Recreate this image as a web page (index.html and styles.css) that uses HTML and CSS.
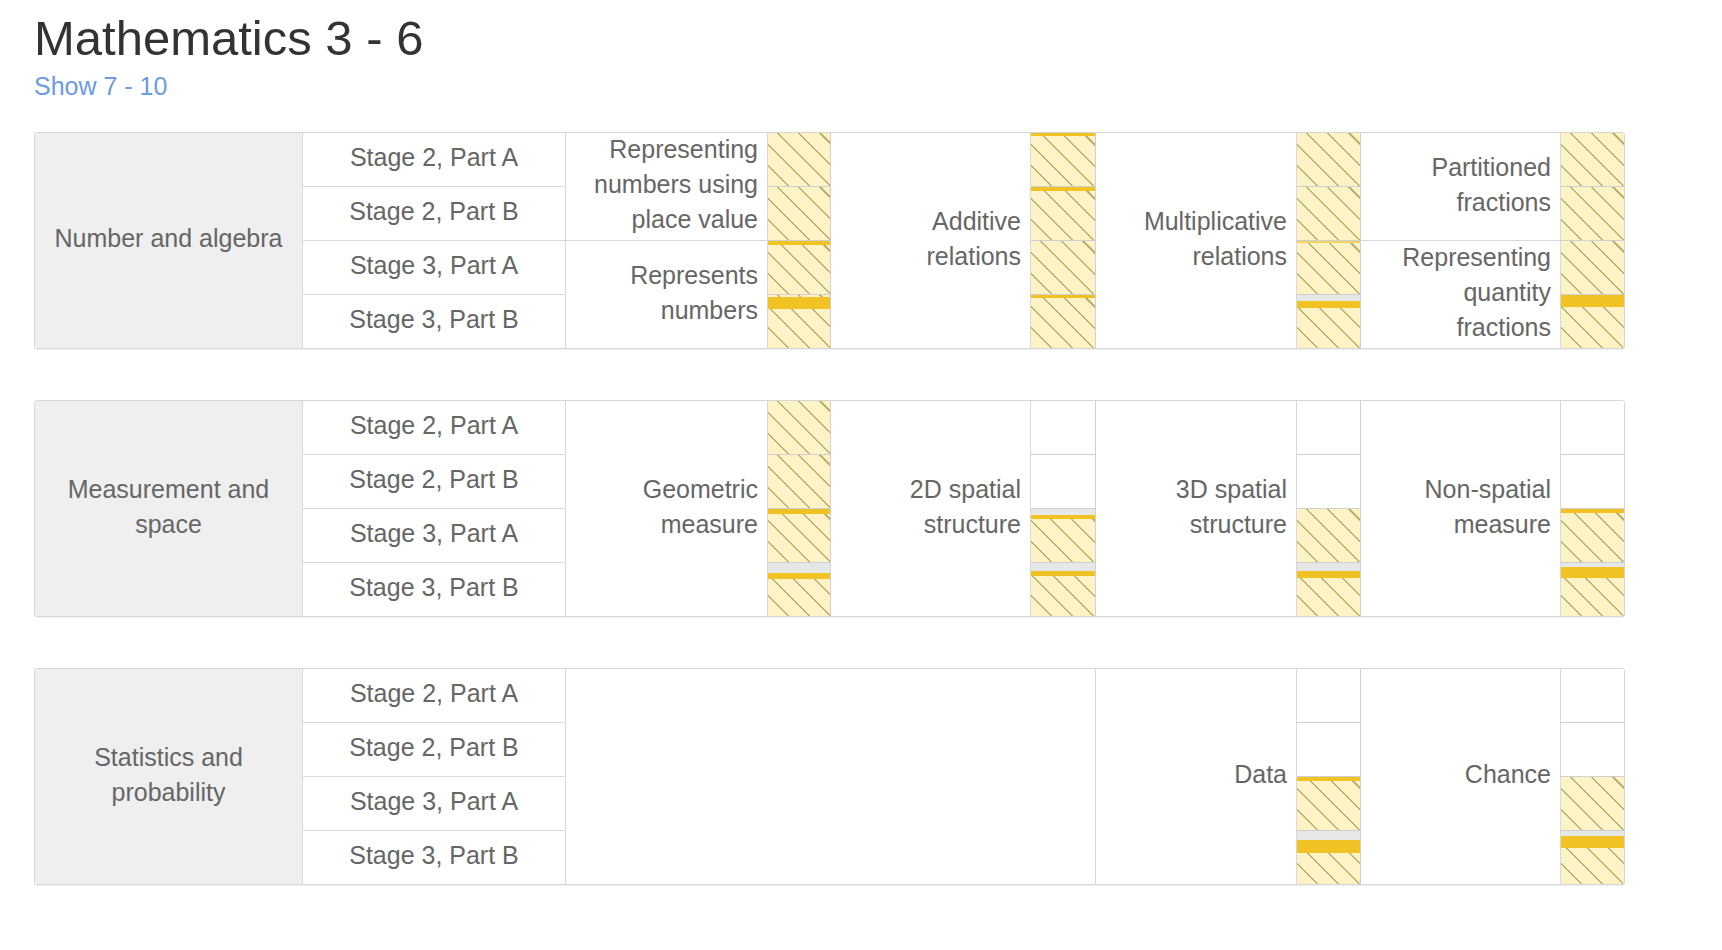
FILE: index.html
```html
<!DOCTYPE html>
<html lang="en">
<head>
<meta charset="utf-8">
<title>Mathematics 3 - 6</title>
<link rel="stylesheet" href="styles.css">
</head>
<body>
<main class="page">
  <h1 class="title">Mathematics 3 - 6</h1>
  <a class="show-link" href="#">Show 7 - 10</a>

  <div class="strands">
    <!-- Number and algebra -->
    <div class="strand">
      <div class="grid">
        <div class="cell cat r4">Number and algebra</div>
        <div class="cell stage">Stage 2, Part A</div>
        <div class="cell stage">Stage 2, Part B</div>
        <div class="cell stage">Stage 3, Part A</div>
        <div class="cell stage">Stage 3, Part B</div>

        <div class="cell label r2">Representing numbers using place value</div>
        <div class="cell label r2">Represents numbers</div>
        <div class="cell bar hatch"></div>
        <div class="cell bar hatch"></div>
        <div class="cell bar hatch"><i class="mark" style="height:4px"></i></div>
        <div class="cell bar hatch"><i class="mark" style="height:12px;margin-top:2px"></i></div>

        <div class="cell label r4">Additive relations</div>
        <div class="cell bar hatch"><i class="mark" style="height:3px"></i></div>
        <div class="cell bar hatch"><i class="mark" style="height:4px"></i></div>
        <div class="cell bar hatch"></div>
        <div class="cell bar hatch"><i class="mark" style="height:3px"></i></div>

        <div class="cell label r4">Multiplicative relations</div>
        <div class="cell bar hatch"></div>
        <div class="cell bar hatch"></div>
        <div class="cell bar hatch"><i class="mark soft" style="height:2px"></i></div>
        <div class="cell bar hatch"><i class="gap" style="height:6px"></i><i class="mark" style="height:7px"></i></div>

        <div class="cell label r2">Partitioned fractions</div>
        <div class="cell label r2">Representing quantity fractions</div>
        <div class="cell bar hatch"></div>
        <div class="cell bar hatch"></div>
        <div class="cell bar hatch"></div>
        <div class="cell bar hatch"><i class="mark" style="height:12px"></i></div>
      </div>
    </div>

    <!-- Measurement and space -->
    <div class="strand">
      <div class="grid">
        <div class="cell cat r4">Measurement and space</div>
        <div class="cell stage">Stage 2, Part A</div>
        <div class="cell stage">Stage 2, Part B</div>
        <div class="cell stage">Stage 3, Part A</div>
        <div class="cell stage">Stage 3, Part B</div>

        <div class="cell label r4">Geometric measure</div>
        <div class="cell bar hatch"></div>
        <div class="cell bar hatch"></div>
        <div class="cell bar hatch"><i class="mark" style="height:5px"></i></div>
        <div class="cell bar hatch"><i class="gap" style="height:10px"></i><i class="mark" style="height:6px"></i></div>

        <div class="cell label r4">2D spatial structure</div>
        <div class="cell bar"></div>
        <div class="cell bar"></div>
        <div class="cell bar hatch"><i class="gap" style="height:6px"></i><i class="mark" style="height:4px"></i></div>
        <div class="cell bar hatch"><i class="gap" style="height:8px"></i><i class="mark" style="height:5px"></i></div>

        <div class="cell label r4">3D spatial structure</div>
        <div class="cell bar"></div>
        <div class="cell bar"></div>
        <div class="cell bar hatch"></div>
        <div class="cell bar hatch"><i class="gap" style="height:8px"></i><i class="mark" style="height:7px"></i></div>

        <div class="cell label r4">Non-spatial measure</div>
        <div class="cell bar"></div>
        <div class="cell bar"></div>
        <div class="cell bar hatch"><i class="mark" style="height:4px"></i></div>
        <div class="cell bar hatch"><i class="gap" style="height:4px"></i><i class="mark" style="height:11px"></i></div>
      </div>
    </div>

    <!-- Statistics and probability -->
    <div class="strand">
      <div class="grid">
        <div class="cell cat r4">Statistics and probability</div>
        <div class="cell stage">Stage 2, Part A</div>
        <div class="cell stage">Stage 2, Part B</div>
        <div class="cell stage">Stage 3, Part A</div>
        <div class="cell stage">Stage 3, Part B</div>

        <div class="cell blank r4 c4"></div>

        <div class="cell label r4">Data</div>
        <div class="cell bar"></div>
        <div class="cell bar"></div>
        <div class="cell bar hatch"><i class="mark" style="height:4px"></i></div>
        <div class="cell bar hatch"><i class="gap" style="height:9px"></i><i class="mark" style="height:13px"></i></div>

        <div class="cell label r4">Chance</div>
        <div class="cell bar"></div>
        <div class="cell bar"></div>
        <div class="cell bar hatch"></div>
        <div class="cell bar hatch"><i class="gap" style="height:5px"></i><i class="mark" style="height:12px"></i></div>
      </div>
    </div>
  </div>
</main>
</body>
</html>
```

FILE: styles.css
```css
* {
  box-sizing: border-box;
}

html, body {
  margin: 0;
  padding: 0;
  background: #ffffff;
}

body {
  font-family: "Liberation Sans", Arial, sans-serif;
  font-size: 25px;
  line-height: 35px;
  color: #666666;
}

.page {
  padding: 12px 0 40px 34px;
}

.title {
  margin: 0;
  font-size: 49px;
  line-height: 53px;
  font-weight: normal;
  color: #333333;
}

.show-link {
  display: inline-block;
  margin-top: 4px;
  font-size: 25px;
  line-height: 35px;
  color: #6b9be0;
  text-decoration: none;
}

.strands {
  display: flex;
  flex-direction: column;
  align-items: flex-start;
  gap: 51px;
  margin-top: 28px;
}

.strand {
  border: 1px solid #d6d6d6;
  border-radius: 3px;
  overflow: hidden;
  box-shadow: 0 1px 1px rgba(0, 0, 0, 0.06);
}

.grid {
  display: grid;
  grid-template-columns: 268px 263px 202px 63px 200px 65px 201px 64px 200px 64px;
  grid-template-rows: repeat(4, 54px);
  grid-auto-flow: column;
  margin-right: -1px;
  margin-bottom: -1px;
}

.cell {
  border-right: 1px solid #d9d9d9;
  border-bottom: 1px solid #d9d9d9;
  min-width: 0;
}

.r2 {
  grid-row: span 2;
}

.r4 {
  grid-row: span 4;
}

.c4 {
  grid-column: span 4;
}

.cat {
  background: #efefef;
  display: flex;
  align-items: center;
  justify-content: center;
  text-align: center;
  padding: 0 12px 4px;
}

.stage {
  display: flex;
  align-items: center;
  justify-content: center;
  text-align: center;
  white-space: nowrap;
  padding-bottom: 4px;
}

.label {
  display: flex;
  align-items: center;
  justify-content: flex-end;
  text-align: right;
  padding: 0 9px 4px 10px;
}

.blank {
  background: #ffffff;
}

.bar {
  display: flex;
  flex-direction: column;
  background: #ffffff;
  border-bottom-color: #cfcfcf;
  border-right-color: #d0d0d0;
}

.hatch {
  background: repeating-linear-gradient(45deg, #fdf3c7 0 13.5px, #bdb16e 13.5px 15px);
}

.gap {
  display: block;
  flex: none;
  background: #e6e7e7;
}

.mark {
  display: block;
  flex: none;
  background: #f0c223;
}

.mark.soft {
  background: #f3d461;
}
```
